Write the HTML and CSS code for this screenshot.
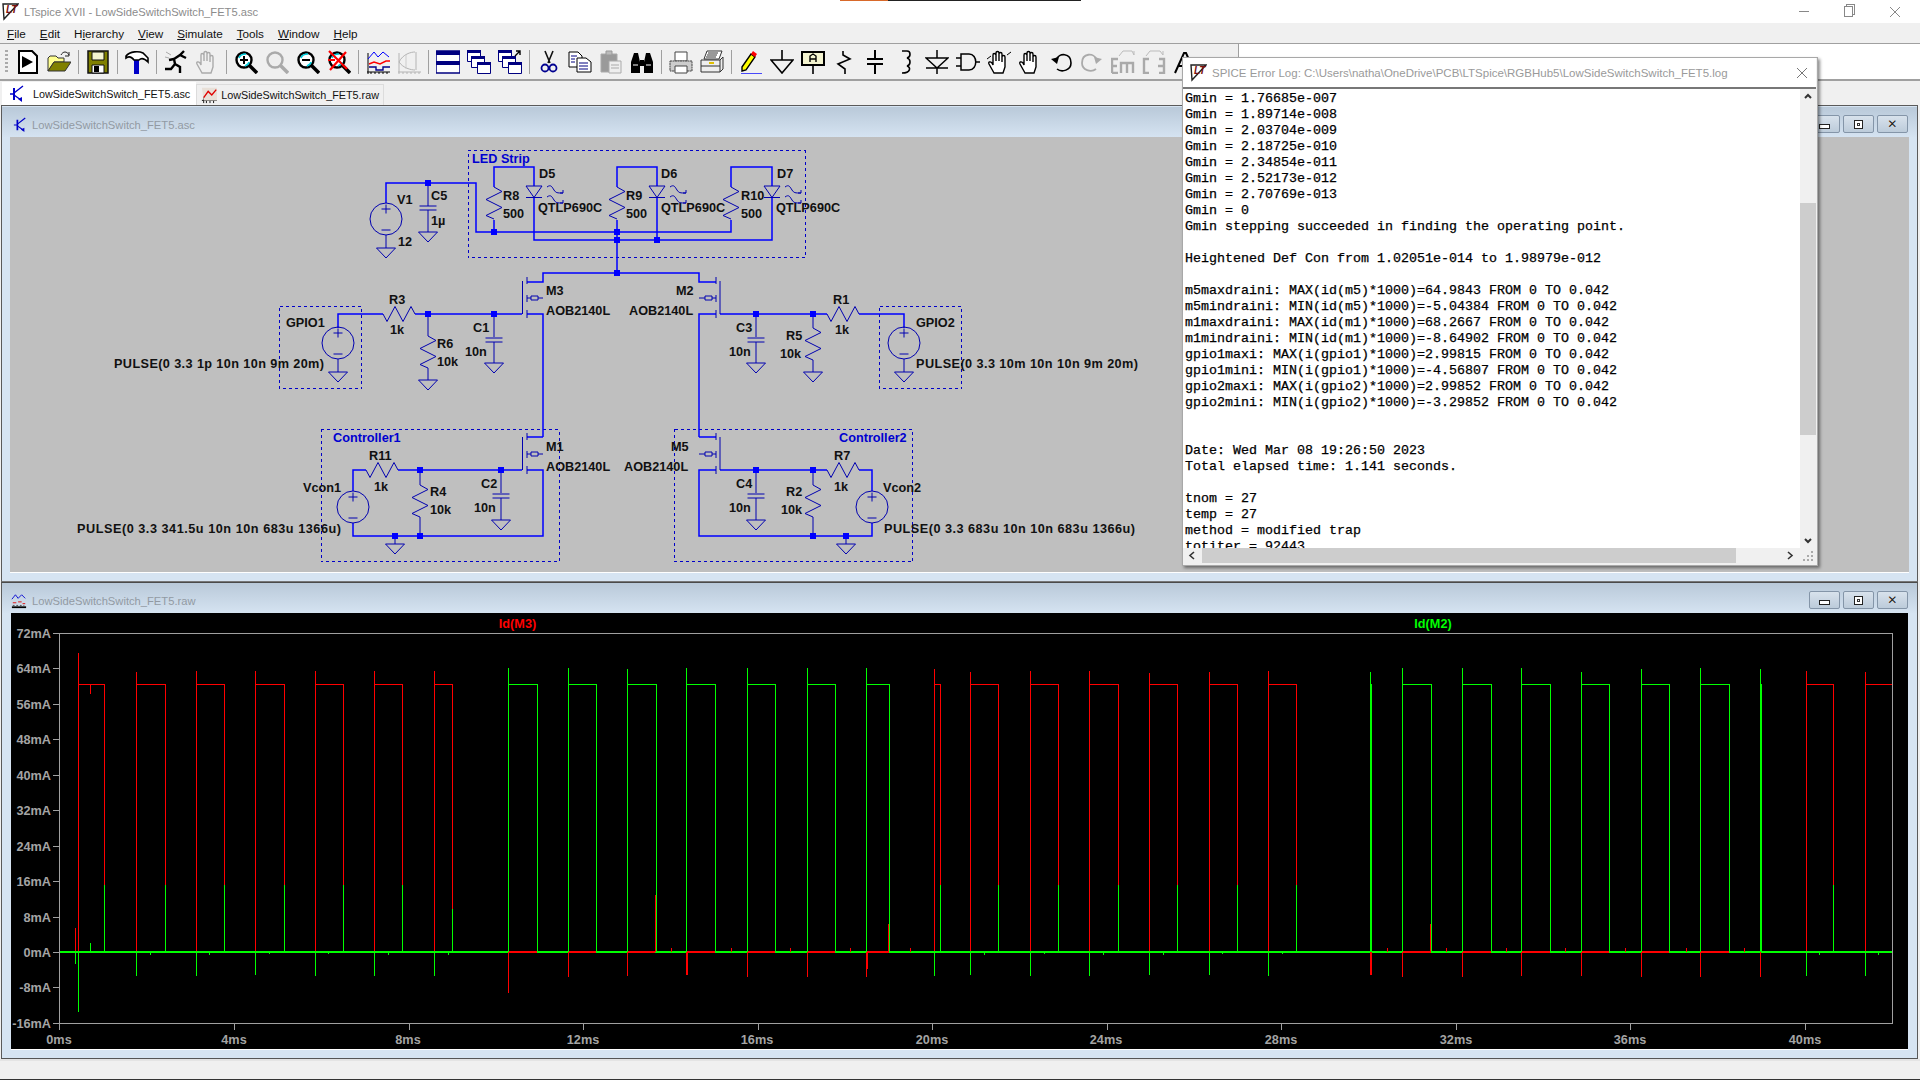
FILE: index.html
```html
<!DOCTYPE html>
<html lang="en">
<head>
<meta charset="utf-8">
<title>LTspice XVII</title>
<link rel="stylesheet" href="styles.css">
</head>
<body>
<div class="os-line"><span class="os-orange"></span><span class="os-black"></span></div>
<header class="titlebar">
  <svg class="lt" width="17" height="18" viewBox="0 0 17 18"><path d="M1 1H16L2 16Z" fill="#fff" stroke="#222" stroke-width="1.4"/><text x="4" y="10" class="lt-txt">LT</text></svg>
  <span class="app-title">LTspice XVII - LowSideSwitchSwitch_FET5.asc</span>
  <span class="wc wc-min"></span><span class="wc wc-max"></span>
  <svg class="wc-x" width="12" height="12" viewBox="0 0 12 12"><path d="M1 1L11 11M11 1L1 11" stroke="#888" fill="none"/></svg>
</header>
<nav class="menubar">
  <span><u>F</u>ile</span><span><u>E</u>dit</span><span>H<u>i</u>erarchy</span><span><u>V</u>iew</span><span><u>S</u>imulate</span><span><u>T</u>ools</span><span><u>W</u>indow</span><span><u>H</u>elp</span>
</nav>
<div class="toolrow">
<div class="toolbar">
  <i class="grip"></i>
  <b class="tb"><svg width="24" height="24" viewBox="0 0 24 24"><path d="M3 1H16L21 6V23H3Z" fill="#fff" stroke="#000" stroke-width="2"/><path d="M6 6L17 12L6 18Z"/></svg></b>
  <b class="tb"><svg width="24" height="24" viewBox="0 0 24 24"><path d="M1 21V8L3 6H9L11 8H17V12H7L1 21Z" fill="#ffff90" stroke="#333"/><path d="M1 21L7 12H24L18 21Z" fill="#808000" stroke="#333"/><path d="M14 5C16 1 20 1 22 5M22 2V6H18" fill="none" stroke="#222"/></svg></b>
  <i class="sep"></i>
  <b class="tb"><svg width="24" height="24" viewBox="0 0 24 24"><path d="M2 1H22V23H2Z" fill="#808000" stroke="#111" stroke-width="1.5"/><path d="M6 2H18V10H6Z" fill="#f4f4d0" stroke="#111"/><path d="M6 15H18V23H6Z" fill="#fff" stroke="#111"/><path d="M8 16H13V22H8Z"/></svg></b>
  <i class="sep"></i>
  <b class="tb"><svg width="24" height="24" viewBox="0 0 24 24"><path d="M9 10H14V24H9Z" fill="#0000c8"/><path d="M1 6C5 1 14 1 18 3L23 8V12C19 8 16 8 14 10H9C7 7 4 6 1 8Z" fill="#fff" stroke="#000" stroke-width="1.6"/></svg></b>
  <i class="sep"></i>
  <b class="tb"><svg width="24" height="24" viewBox="0 0 24 24"><path d="M1 19H7L11 14L10 9L16 5L20 1M11 14L16 17V23M10 9L5 10M16 5L22 8" fill="none" stroke="#000" stroke-width="2.4"/><path d="M2 2L7 5M1 7L5 8" stroke="#aaa"/></svg></b>
  <b class="tb"><svg width="24" height="24" viewBox="0 0 24 24"><use href="#hand" class="hand-off"/></svg></b>
  <i class="sep"></i>
  <b class="tb"><svg width="24" height="24" viewBox="0 0 24 24"><use href="#lens"/><path d="M6 10H14M10 6V14" stroke="#000" stroke-width="2"/></svg></b>
  <b class="tb"><svg width="24" height="24" viewBox="0 0 24 24"><circle cx="10" cy="10" r="7.5" fill="#eee" stroke="#aaa" stroke-width="2.4"/><path d="M15.5 15.5L23 23" stroke="#aaa" stroke-width="3.5"/></svg></b>
  <b class="tb"><svg width="24" height="24" viewBox="0 0 24 24"><use href="#lens"/><path d="M6 10H14" stroke="#000" stroke-width="2"/></svg></b>
  <b class="tb"><svg width="24" height="24" viewBox="0 0 24 24"><use href="#lens"/><path d="M2 1L20 19M19 2L3 20M1 10H8" stroke="#f00" stroke-width="2.2"/></svg></b>
  <i class="sep"></i>
  <b class="tb"><svg width="24" height="24" viewBox="0 0 24 24"><path d="M1 22H24M2 3V24M5 22V24M9 22V24M13 22V24M17 22V24M21 22V24" stroke="#000" fill="none"/><path d="M2 9L8 2L12 7L17 2L23 7" stroke="#00f" fill="none"/><path d="M3 14L8 12L14 14L20 11H24" stroke="#f00" fill="none" stroke-width="1.4"/><path d="M3 17H10V20H17V17H24" stroke="#008" fill="none" stroke-width="1.4"/></svg></b>
  <b class="tb"><svg width="24" height="24" viewBox="0 0 24 24"><path d="M1 22H24M2 3V24M6 22V24M10 22V24M14 22V24M18 22V24M22 22V24M2 12C6 4 14 2 18 2M19 2V20M2 12C6 18 14 20 18 20" stroke="#b4b4b4" fill="none"/><path d="M9 5V19" stroke="#ccc"/></svg></b>
  <i class="sep"></i>
  <b class="tb"><svg width="24" height="24" viewBox="0 0 24 24"><path d="M0 1H24V23H0Z" fill="#fff" stroke="#000080" stroke-width="1.5"/><path d="M0 1H24V5H0ZM0 11H24V15H0Z" fill="#000080"/></svg></b>
  <b class="tb"><svg width="24" height="24" viewBox="0 0 24 24"><use href="#mw" x="0" y="0"/><use href="#mw" x="4" y="6"/><use href="#mw" x="10" y="12"/></svg></b>
  <b class="tb"><svg width="24" height="24" viewBox="0 0 24 24"><use href="#mw" x="0" y="0"/><use href="#mw" x="4" y="6"/><use href="#mw" x="10" y="12"/><path d="M17 6L22 1M18 1H22V5" stroke="#000" fill="none" stroke-width="1.4"/></svg></b>
  <i class="sep"></i>
  <b class="tb"><svg width="24" height="24" viewBox="0 0 24 24"><path d="M8 1L13 13M16 1L11 13" stroke="#111" stroke-width="1.6"/><circle cx="8" cy="18" r="3.5" fill="none" stroke="#000090" stroke-width="1.8"/><circle cx="16" cy="18" r="3.5" fill="none" stroke="#000090" stroke-width="1.8"/></svg></b>
  <b class="tb"><svg width="24" height="24" viewBox="0 0 24 24"><path d="M1 2H10L14 6V17H1Z" fill="#fff" stroke="#000"/><path d="M9 8H18L23 12V22H9Z" fill="#fff" stroke="#000"/><path d="M3 6H9M3 9H7M3 12H7M11 13H20M11 16H20M11 19H20" stroke="#000080"/></svg></b>
  <b class="tb"><svg width="24" height="24" viewBox="0 0 24 24"><path d="M2 4H18V22H2Z" fill="#9a9a9a" stroke="#aaa"/><path d="M7 1H13V5H7Z" fill="#bbb" stroke="#999"/><path d="M10 11H22V23H10Z" fill="#eee" stroke="#aaa"/><path d="M12 15H20M12 18H20" stroke="#aaa"/></svg></b>
  <b class="tb"><svg width="24" height="24" viewBox="0 0 24 24"><path d="M1 12L4 3H8L10 12V23H1ZM23 12L20 3H16L14 12V23H23ZM10 10H14V16H10Z"/><path d="M3 15H8M16 15H21" stroke="#fff"/></svg></b>
  <i class="sep"></i>
  <b class="tb"><svg width="24" height="24" viewBox="0 0 24 24"><path d="M6 2H18V11H6Z" fill="#fff" stroke="#444"/><path d="M1 11H23V21H1Z" fill="#ccc" stroke="#444" stroke-dasharray="2 .5"/><path d="M6 16H18V23H6Z" fill="#fff" stroke="#444"/></svg></b>
  <b class="tb"><svg width="24" height="24" viewBox="0 0 24 24"><path d="M7 1H22L19 9H4Z" fill="#fff" stroke="#333"/><path d="M1 10H20L23 7V19L20 22H1Z" fill="#eee" stroke="#333"/><path d="M1 16H20M20 10V22M8 3H18M7 5H17M6 7H16" stroke="#333"/><path d="M9 13H14" stroke="#e0c000" stroke-width="2"/></svg></b>
  <i class="sep"></i>
  <b class="tb"><svg width="24" height="24" viewBox="0 0 24 24"><path d="M3 17L12 4L16 7L7 20L3 21Z" fill="#ff0" stroke="#000" stroke-width="1.4"/><path d="M12 4L14 1L18 4L16 7Z" fill="#f00"/><path d="M2 24H23" stroke="#00f" stroke-width="1.4"/></svg></b>
  <b class="tb"><svg width="24" height="24" viewBox="0 0 24 24"><path d="M12 0V10M1 10H23L12 23Z" fill="none" stroke="#000" stroke-width="1.6"/></svg></b>
  <b class="tb"><svg width="24" height="24" viewBox="0 0 24 24"><path d="M1 2H23V15H1Z" fill="#f4f4d0" stroke="#000" stroke-width="2"/><path d="M12 15V24" stroke="#000" stroke-width="1.6"/><path d="M9 12V6L12 4L15 6V12M9 9H15" fill="none" stroke="#000" stroke-width="1.4"/></svg></b>
  <b class="tb"><svg width="24" height="24" viewBox="0 0 24 24"><path d="M11 1V5L18 9L6 14L13 19V24" fill="none" stroke="#000" stroke-width="1.6"/></svg></b>
  <b class="tb"><svg width="24" height="24" viewBox="0 0 24 24"><path d="M12 0V9M4 9H20M4 14H20M12 14V24" fill="none" stroke="#000" stroke-width="2"/></svg></b>
  <b class="tb"><svg width="24" height="24" viewBox="0 0 24 24"><path d="M8 1H13C17 1 17 7 13 8C17 9 17 15 13 16C17 17 17 23 8 23" fill="none" stroke="#000" stroke-width="1.6"/></svg></b>
  <b class="tb"><svg width="24" height="24" viewBox="0 0 24 24"><path d="M12 0V8M1 8H23L12 18ZM1 18H23M12 18V26" fill="none" stroke="#000" stroke-width="1.5"/></svg></b>
  <b class="tb"><svg width="24" height="24" viewBox="0 0 24 24"><path d="M5 4H13C22 4 22 20 13 20H5ZM0 8H5M0 16H5M19 12H24" fill="none" stroke="#000" stroke-width="1.5"/></svg></b>
  <b class="tb"><svg width="24" height="24" viewBox="0 0 24 24"><use href="#hand" class="hand-on"/><path d="M0 9L4 6M20 5L24 2" stroke="#000"/></svg></b>
  <b class="tb"><svg width="24" height="24" viewBox="0 0 24 24"><use href="#hand" class="hand-on"/></svg></b>
  <b class="tb"><svg width="24" height="24" viewBox="0 0 24 24"><path d="M7 10C10 2 22 3 22 13C22 20 13 23 8 19" fill="none" stroke="#000" stroke-width="1.6"/><path d="M2 9L8 14L10 7Z" /></svg></b>
  <b class="tb"><svg width="24" height="24" viewBox="0 0 24 24"><path d="M17 10C14 2 2 3 2 13C2 20 11 23 16 19" fill="none" stroke="#aaa" stroke-width="1.8"/><path d="M22 9L16 14L14 7Z" fill="#aaa"/></svg></b>
  <b class="tb"><svg width="24" height="24" viewBox="0 0 24 24"><path d="M1 23V9H7M1 16H6M1 23H7M10 23V13H22V23M16 13V23" fill="none" stroke="#aaa" stroke-width="2.4"/><path d="M8 6L12 1H21L23 5M23 5V1" fill="none" stroke="#bbb"/></svg></b>
  <b class="tb"><svg width="24" height="24" viewBox="0 0 24 24"><path d="M7 9H2V23H7M17 9H22V23H17M16 16H22" fill="none" stroke="#aaa" stroke-width="2.4"/><path d="M4 6L8 1H18L21 5M21 5V1" fill="none" stroke="#bbb"/></svg></b>
  <b class="tb"><svg width="24" height="24" viewBox="0 0 24 24"><path d="M2 23L11 3H13L22 23M6 16H18" fill="none" stroke="#000" stroke-width="2"/></svg></b>
</div>
<div class="toolfill"></div>
</div>
<div class="tabs">
  <span class="tab tab-on"><svg width="16" height="18" viewBox="0 0 16 18"><use href="#npn"/></svg>LowSideSwitchSwitch_FET5.asc</span>
  <span class="tab"><svg width="18" height="18" viewBox="0 0 18 18"><use href="#wave"/></svg>LowSideSwitchSwitch_FET5.raw</span>
</div>

<main class="mdi">
<section class="win win-a">
  <div class="wtitle"><svg class="ico-a" width="14" height="18" viewBox="0 0 16 18"><use href="#npn"/></svg><span>LowSideSwitchSwitch_FET5.asc</span><div class="wbtns"><b class="wb"><i class="ic-min"></i></b><b class="wb"><i class="ic-max"></i></b><b class="wb"><i class="ic-x">✕</i></b></div></div>
  <svg class="canvas schem" viewBox="10 137 1899 435" width="1899" height="435">
    <defs>
      <path id="gnd" d="M-9.5 0H9.5L0 10Z"/>
      <path id="rv" d="M0 0L8 4.5L-8 12.5L8 20.5L-8 28.5L0 32"/>
      <path id="rh" d="M0 0L4 7.5L12 -7.5L20 7.5L28 -7.5L32 0"/>
      <path id="cap" d="M-8.5 0H8.5M-8.5 4H8.5"/>
      <g id="src"><circle r="16"/><path d="M-4.5 -10H4.5M0 -14.5V-5.5M-4.5 11H4.5"/></g>
      <g id="led"><path d="M-8 0H8L0 11.5ZM-8 11.5H8"/><path d="M13 1C17 -2 18 1 20 4S23 7 29 7M29 4V7H26M13 11C17 8 18 11 20 14S23 17 29 17M29 14V17H26"/></g>
      <path id="mr" d="M-4.5 -1V32M0 -5V2M0 13V20M0 28V36M0 16H4M4 14H11V18H4ZM11 16H16"/>
      <path id="ml" d="M4 -1V32M0 -5V2M0 13V20M0 28V36M0 16H-4M-4 14H-11V18H-4ZM-11 16H-17"/>
      <path id="j" d="M-3 -3H3V3H-3Z"/>
    </defs>
    <rect class="bg" x="10" y="137" width="1899" height="435"/>
    <g class="dash">
      <rect x="468" y="150.5" width="337" height="107"/>
      <rect x="279.5" y="306.5" width="82" height="82"/>
      <rect x="879.5" y="306.5" width="82" height="82"/>
      <rect x="321" y="429.5" width="238" height="132"/>
      <rect x="674.5" y="429.5" width="238" height="132"/>
    </g>
    <path class="wire" d="M386 203V183H476V232H731V220M494 220V232M494 187V167H534V186M534 197V240H772V197M617 187V167H657V186M617 220V273M731 187V167H772V186M657 197V240M617 273H543V282H527M617 273H699V282H716M543 437V314H527M543 437H527M699 437V314H716M699 437H716M338 328V314H383M415 314H522M720 314H827M859 314H904V328M353 491V470H366M398 470H522M353 523V536H543V470H527M872 491V470H859M827 470H720M872 523V536H699V470H716"/>
    <g class="comp">
      <path d="M386 235V248M428 183V206M428 210V232M428 314V336M428 368V380M494 314V337M494 342V363M756 314V337M756 342V363M813 314V328M813 360V372M338 359V372M904 359V372M420 470V485M420 517V536M501 470V493M501 498V520M395 536V544M756 470V493M756 498V520M813 470V485M813 517V536M846 536V544"/>
      <use href="#src" x="386" y="219"/><use href="#src" x="338" y="343"/><use href="#src" x="904" y="343"/><use href="#src" x="353" y="507"/><use href="#src" x="872" y="507"/>
      <use href="#gnd" x="386" y="248"/><use href="#gnd" x="428" y="232"/><use href="#gnd" x="338" y="372"/><use href="#gnd" x="428" y="380"/><use href="#gnd" x="494" y="363"/><use href="#gnd" x="756" y="363"/><use href="#gnd" x="813" y="372"/><use href="#gnd" x="904" y="372"/><use href="#gnd" x="501" y="520"/><use href="#gnd" x="395" y="544"/><use href="#gnd" x="756" y="520"/><use href="#gnd" x="846" y="544"/>
      <use href="#cap" x="428" y="206"/><use href="#cap" x="494" y="338"/><use href="#cap" x="756" y="338"/><use href="#cap" x="501" y="494"/><use href="#cap" x="756" y="494"/>
      <use href="#rv" x="494" y="187"/><use href="#rv" x="617" y="187"/><use href="#rv" x="731" y="187"/><use href="#rv" x="428" y="336"/><use href="#rv" x="813" y="328"/><use href="#rv" x="420" y="485"/><use href="#rv" x="813" y="485"/>
      <use href="#rh" x="383" y="314"/><use href="#rh" x="827" y="314"/><use href="#rh" x="366" y="470"/><use href="#rh" x="827" y="470"/>
      <use href="#led" x="534" y="186"/><use href="#led" x="657" y="186"/><use href="#led" x="772" y="186"/>
      <use href="#mr" x="527" y="282"/><use href="#mr" x="527" y="438"/><use href="#ml" x="716" y="282"/><use href="#ml" x="716" y="438"/>
    </g>
    <g class="junc">
      <use href="#j" x="428" y="183"/><use href="#j" x="494" y="232"/><use href="#j" x="617" y="232"/><use href="#j" x="617" y="240"/><use href="#j" x="657" y="240"/><use href="#j" x="617" y="273"/><use href="#j" x="428" y="314"/><use href="#j" x="494" y="314"/><use href="#j" x="756" y="314"/><use href="#j" x="813" y="314"/><use href="#j" x="420" y="470"/><use href="#j" x="501" y="470"/><use href="#j" x="395" y="536"/><use href="#j" x="420" y="536"/><use href="#j" x="756" y="470"/><use href="#j" x="813" y="470"/><use href="#j" x="813" y="536"/><use href="#j" x="846" y="536"/>
    </g>
    <g class="nm">
      <text x="472" y="163">LED Strip</text><text x="333" y="442">Controller1</text><text x="839" y="442">Controller2</text>
    </g>
    <g class="lb">
      <text x="397" y="204">V1</text><text x="398" y="246">12</text><text x="431" y="200">C5</text><text x="431" y="225">1µ</text>
      <text x="503" y="200">R8</text><text x="503" y="218">500</text><text x="539" y="178">D5</text><text x="538" y="212">QTLP690C</text>
      <text x="626" y="200">R9</text><text x="626" y="218">500</text><text x="661" y="178">D6</text><text x="661" y="212">QTLP690C</text>
      <text x="741" y="200">R10</text><text x="741" y="218">500</text><text x="777" y="178">D7</text><text x="776" y="212">QTLP690C</text>
      <text x="286" y="327">GPIO1</text><text x="114" y="368" textLength="210">PULSE(0 3.3 1p 10n 10n 9m 20m)</text><text x="389" y="304">R3</text><text x="390" y="334">1k</text>
      <text x="437" y="348">R6</text><text x="437" y="366">10k</text><text x="473" y="332">C1</text><text x="465" y="356">10n</text>
      <text x="546" y="295">M3</text><text x="546" y="315">AOB2140L</text><text x="676" y="295">M2</text><text x="629" y="315">AOB2140L</text>
      <text x="736" y="332">C3</text><text x="729" y="356">10n</text><text x="786" y="340">R5</text><text x="780" y="358">10k</text>
      <text x="833" y="304">R1</text><text x="835" y="334">1k</text><text x="916" y="327">GPIO2</text><text x="916" y="368" textLength="222">PULSE(0 3.3 10m 10n 10n 9m 20m)</text>
      <text x="369" y="460">R11</text><text x="374" y="491">1k</text><text x="303" y="492">Vcon1</text><text x="430" y="496">R4</text><text x="430" y="514">10k</text>
      <text x="481" y="488">C2</text><text x="474" y="512">10n</text><text x="546" y="451">M1</text><text x="546" y="471">AOB2140L</text><text x="77" y="533" textLength="264">PULSE(0 3.3 341.5u 10n 10n 683u 1366u)</text>
      <text x="671" y="451">M5</text><text x="624" y="471">AOB2140L</text><text x="834" y="460">R7</text><text x="834" y="491">1k</text><text x="883" y="492">Vcon2</text><text x="884" y="533" textLength="251">PULSE(0 3.3 683u 10n 10n 683u 1366u)</text>
      <text x="736" y="488">C4</text><text x="729" y="512">10n</text><text x="786" y="496">R2</text><text x="781" y="514">10k</text>
    </g>
  </svg>
</section>

<section class="win win-b">
  <div class="wtitle"><svg width="16" height="18" viewBox="0 0 18 18"><use href="#wave2"/></svg><span>LowSideSwitchSwitch_FET5.raw</span><div class="wbtns"><b class="wb"><i class="ic-min"></i></b><b class="wb"><i class="ic-max"></i></b><b class="wb"><i class="ic-x">✕</i></b></div></div>
  <svg class="canvas plot" viewBox="11 613 1897 436" width="1897" height="436">
    <rect class="black" x="11" y="613" width="1897" height="436"/>
    <path class="axis" d="M59.5 633.5H1892.5V1023.5H59.5ZM53 633.5H60M53 668.5H60M53 704.5H60M53 739.5H60M53 775.5H60M53 810.5H60M53 846.5H60M53 881.5H60M53 917.5H60M53 952.5H60M53 987.5H60M53 1023.5H60M59.5 1023V1030M234.5 1023V1030M409.5 1023V1030M583.5 1023V1030M758.5 1023V1030M932.5 1023V1030M1107.5 1023V1030M1281.5 1023V1030M1456.5 1023V1030M1630.5 1023V1030M1805.5 1023V1030"/>
    <g class="ax-y">
      <text x="51" y="638">72mA</text><text x="51" y="673">64mA</text><text x="51" y="709">56mA</text><text x="51" y="744">48mA</text><text x="51" y="780">40mA</text><text x="51" y="815">32mA</text><text x="51" y="851">24mA</text><text x="51" y="886">16mA</text><text x="51" y="922">8mA</text><text x="51" y="957">0mA</text><text x="51" y="992">-8mA</text><text x="51" y="1028">-16mA</text>
    </g>
    <g class="ax-x">
      <text x="59" y="1044">0ms</text><text x="234" y="1044">4ms</text><text x="408" y="1044">8ms</text><text x="583" y="1044">12ms</text><text x="757" y="1044">16ms</text><text x="932" y="1044">20ms</text><text x="1106" y="1044">24ms</text><text x="1281" y="1044">28ms</text><text x="1456" y="1044">32ms</text><text x="1630" y="1044">36ms</text><text x="1805" y="1044">40ms</text>
    </g>
    <text class="tr-r" x="517.5" y="628">Id(M3)</text>
    <text class="tr-g" x="1433" y="628">Id(M2)</text>
    <path class="red t1" d="M78.5 952V653M104.5 684V885M136.5 952V672M165.5 684V885M196.5 952V671M224.5 684V885M255.5 952V671M284.5 684V885M315.5 952V671M343.5 684V885M374.5 952V671M402.5 684V885M434.5 952V671M452.5 684V909M934.5 952V669M940.5 684V885M970.5 952V672M998.5 684V885M1030.5 952V671M1058.5 684V885M1089.5 952V671M1118.5 684V885M1149.5 952V673M1177.5 684V885M1209.5 952V672M1237.5 684V885M1268.5 952V671M1296.5 684V885M1806.5 952V671M1833.5 684V885M1865.5 952V672M75.5 952V928M90.5 684V694"/>
    <path class="red t1" d="M78 684.5H104M136 684.5H165M196 684.5H224M255 684.5H284M315 684.5H343M374 684.5H402M434 684.5H452M934 684.5H940M970 684.5H998M1030 684.5H1058M1089 684.5H1118M1149 684.5H1177M1209 684.5H1237M1268 684.5H1296M1806 684.5H1833M1865 684.5H1892"/>
    <path class="green t1" d="M104.5 952V885M165.5 952V885M224.5 952V885M284.5 952V885M343.5 952V885M402.5 952V885M452.5 952V909M940.5 952V885M998.5 952V885M1058.5 952V885M1118.5 952V885M1177.5 952V885M1237.5 952V885M1296.5 952V885M1833.5 952V885M78.5 952V1012M75.5 952V964M136.5 952V976M196.5 952V976M255.5 952V975M315.5 952V976M374.5 952V976M434.5 952V976M934.5 952V976M970.5 952V975M1030.5 952V976M1089.5 952V976M1149.5 952V975M1209.5 952V975M1268.5 952V976M1806.5 952V976M1865.5 952V976M90.5 952V943M150.5 952V955M209.5 952V955M269.5 952V954M328.5 952V954M388.5 952V955M448.5 952V955M984.5 952V955M1044.5 952V954M1103.5 952V955M1163.5 952V955M1222.5 952V954M1282.5 952V954M1819.5 952V955M1878.5 952V955"/>
    <path class="green t1" d="M508.5 952V668M537.5 684V952M568.5 952V668M596.5 684V952M627.5 952V669M656.5 684V952M686.5 952V668M715.5 684V952M747.5 952V668M775.5 684V952M807.5 952V668M835.5 684V952M866.5 952V668M889.5 684V952M1370.5 952V672M1371.5 684V952M1402.5 952V668M1431.5 684V952M1462.5 952V668M1491.5 684V952M1521.5 952V668M1550.5 684V952M1581.5 952V672M1609.5 684V952M1641.5 952V669M1669.5 684V952M1700.5 952V668M1729.5 684V952M1760.5 952V669M1761.5 684V952"/>
    <path class="green t1" d="M508 684.5H537M568 684.5H596M627 684.5H656M686 684.5H715M747 684.5H775M807 684.5H835M866 684.5H889M1402 684.5H1431M1462 684.5H1491M1521 684.5H1550M1581 684.5H1609M1641 684.5H1669M1700 684.5H1729"/>
    <path class="green t2" d="M60 952H1892"/>
    <path class="red t2" d="M509 952H537M569 952H596M628 952H655M687 952H715M748 952H775M808 952H835M867 952H889M1403 952H1431M1463 952H1491M1522 952H1550M1582 952H1609M1642 952H1669M1701 952H1729"/>
    <path class="red t1" d="M508.5 952V993M568.5 952V977M627.5 952V976M686.5 952V975M687.5 952V975M747.5 952V977M807.5 952V977M866.5 952V977M867.5 952V969M1370.5 952V975M1371.5 952V975M1402.5 952V977M1462.5 952V977M1521.5 952V976M1581.5 952V976M1641.5 952V977M1700.5 952V977M1760.5 952V977M655.5 952V895M888.5 952V924M1430.5 952V924M671.5 952V948M731.5 952V948M790.5 952V948M850.5 952V948M910.5 952V948M1387.5 952V948M1446.5 952V948M1506.5 952V948M1565.5 952V948M1625.5 952V948M1686.5 952V948M1744.5 952V948"/>
  </svg>
</section>
</main>
<footer class="status"></footer>

<aside class="log">
  <div class="log-title">
    <svg width="17" height="18" viewBox="0 0 17 18"><path d="M1 1H16L2 16Z" fill="#fff" stroke="#222" stroke-width="1.4"/><text x="4" y="10" class="lt-txt">LT</text></svg>
    <span>SPICE Error Log: C:\Users\natha\OneDrive\PCB\LTSpice\RGBHub5\LowSideSwitchSwitch_FET5.log</span>
    <svg class="log-x" width="12" height="12" viewBox="0 0 12 12"><path d="M1 1L11 11M11 1L1 11" stroke="#777" fill="none"/></svg>
  </div>
  <div class="log-body">
<pre class="log-text">Gmin = 1.76685e-007
Gmin = 1.89714e-008
Gmin = 2.03704e-009
Gmin = 2.18725e-010
Gmin = 2.34854e-011
Gmin = 2.52173e-012
Gmin = 2.70769e-013
Gmin = 0
Gmin stepping succeeded in finding the operating point.

Heightened Def Con from 1.02051e-014 to 1.98979e-012

m5maxdraini: MAX(id(m5)*1000)=64.9843 FROM 0 TO 0.042
m5mindraini: MIN(id(m5)*1000)=-5.04384 FROM 0 TO 0.042
m1maxdraini: MAX(id(m1)*1000)=68.2667 FROM 0 TO 0.042
m1mindraini: MIN(id(m1)*1000)=-8.64902 FROM 0 TO 0.042
gpio1maxi: MAX(i(gpio1)*1000)=2.99815 FROM 0 TO 0.042
gpio1mini: MIN(i(gpio1)*1000)=-4.56807 FROM 0 TO 0.042
gpio2maxi: MAX(i(gpio2)*1000)=2.99852 FROM 0 TO 0.042
gpio2mini: MIN(i(gpio2)*1000)=-3.29852 FROM 0 TO 0.042


Date: Wed Mar 08 19:26:50 2023
Total elapsed time: 1.141 seconds.

tnom = 27
temp = 27
method = modified trap
totiter = 92443</pre>
    <div class="vscroll">
      <svg width="16" height="16" viewBox="0 0 16 16"><path d="M5 9L8 6L11 9" fill="none" stroke="#333" stroke-width="2"/></svg>
      <div class="vthumb"></div>
      <div class="spacer"></div>
      <svg width="16" height="16" viewBox="0 0 16 16"><path d="M5 7L8 10L11 7" fill="none" stroke="#333" stroke-width="2"/></svg>
    </div>
  </div>
  <div class="hscroll">
    <svg width="19" height="15" viewBox="0 0 19 15"><path d="M11 4L7 7.5L11 11" fill="none" stroke="#333" stroke-width="1.6"/></svg>
    <div class="hthumb"></div>
    <div class="spacer"></div>
    <svg width="19" height="15" viewBox="0 0 19 15"><path d="M7 4L11 7.5L7 11" fill="none" stroke="#333" stroke-width="1.6"/></svg>
    <svg width="16" height="15" viewBox="0 0 16 15"><path d="M11 11h2v2h-2zM7 11h2v2H7zM11 7h2v2h-2zM3 11h2v2H3zM7 7h2v2H7zM11 3h2v2h-2z" fill="#aaa"/></svg>
  </div>
</aside>

<svg class="sprites" width="0" height="0" aria-hidden="true">
  <defs>
    <g id="lens"><circle cx="10" cy="10" r="7.5" fill="#fff" stroke="#000" stroke-width="2.4"/><path d="M5 8C6 5 9 4 12 4M15 12C15 14 13 15 11 16" fill="none" stroke="#00d0e0" stroke-width="1.6"/><path d="M15.5 15.5L23 23" stroke="#000" stroke-width="3.5"/></g>
    <path id="hand" d="M7 23L2 14C1 12 3 11 5 13L6 15V5C6 3 8 3 9 5V11V3C9 1 12 1 12 3V11V4C12 2 15 2 15 4V12V7C15 5 18 5 18 7V17L16 23Z"/>
    <g id="mw"><path d="M0.5 .5H13.5V11.5H.5Z" fill="#fff" stroke="#000080"/><path d="M0 0H14V3H0Z" fill="#000080"/></g>
    <g id="npn"><path d="M5 3V15" stroke="#0000c8" stroke-width="2" fill="none"/><path d="M14 1L5 8M5 10L12 15M1 9H5" stroke="#0000c8" stroke-width="1.4" fill="none"/><path d="M9 14L13 17L13 12Z" fill="#0000c8"/></g>
    <g id="wave"><path d="M1 15H18M3 2V18M6 15V18M10 15V18M14 15V18" stroke="#000" fill="none"/><path d="M1 1H18V15H3Z" fill="#e8e0d8"/><path d="M3 12L8 5L12 9L17 3" stroke="#e00000" stroke-width="1.5" fill="none"/></g>
    <g id="wave2"><path d="M1 16H17" stroke="#000" stroke-width="2"/><path d="M1 7L5 2L8 6L12 2L16 6" stroke="#0000d0" fill="none"/><path d="M2 11H6M8 10H12M13 12H16" stroke="#e00000" fill="none"/><path d="M2 14H15" stroke="#444" stroke-dasharray="2 2"/></g>
  </defs>
</svg>
</body>
</html>
```
FILE: styles.css
```css
* { box-sizing: border-box; }
html, body { margin: 0; padding: 0; }
body {
  width: 1920px; height: 1080px; overflow: hidden; position: relative;
  background: #f0f0f0; display: flex; flex-direction: column;
  font-family: "Liberation Sans", Arial, sans-serif; color: #000;
}
.os-line { position: absolute; top: 0; left: 840px; display: flex; height: 1px; }
.os-orange { width: 48px; background: #d8692a; }
.os-black { width: 193px; background: #222; }

.titlebar { height: 23px; flex: none; background: #fff; display: flex; align-items: center; padding-left: 2px; }
.lt-txt { font: italic bold 10px "Liberation Sans", sans-serif; fill: #7a1010; }
.app-title { margin-left: 5px; font-size: 11.2px; color: #8c8c8c; flex: 1; }
.wc { display: block; }
.wc-min { width: 10px; height: 1px; background: #888; margin-right: 35px; }
.wc-max { width: 9px; height: 11px; border: 1px solid #888; margin-right: 36px; box-shadow: 2px -2px 0 -1px #fff, 2px -2px 0 0 #888; }
.wc-x { margin-right: 19px; }

.menubar { height: 20px; flex: none; background: #f0f0f0; display: flex; gap: 14px; align-items: center; padding-left: 7px; font-size: 11.7px; color: #111; }

.toolrow { height: 38px; flex: none; display: flex; border-top: 1px solid #a0a0a0; border-bottom: 2px solid #a0a0a0; }
.toolbar { width: 1239px; flex: none; display: flex; align-items: center; background: #f0f0f0; border-right: 1px solid #a0a0a0; overflow: hidden; }
.toolfill { flex: 1; background: #fff; }
.grip { width: 3px; height: 24px; margin: 0 4px 0 5px; background: repeating-linear-gradient(#aaa 0 2px, transparent 2px 4px); display: block; flex: none; }
.tb { width: 31px; flex: none; height: 24px; display: flex; justify-content: center; }
.sep { width: 1px; flex: none; height: 24px; margin: 0 3.5px; background: #a0a0a0; display: block; }
.hand-on { fill: #fff; stroke: #000; stroke-width: 1.4; }
.hand-off { fill: #f0f0f0; stroke: #aaa; stroke-width: 1.4; }

.tabs { height: 24px; flex: none; display: flex; align-items: flex-end; padding-left: 2px; font-size: 10.8px; color: #111; }
.tab { height: 21px; display: flex; align-items: center; gap: 4px; padding: 0 4px 1px; background: #f0f0f0; border: 1px solid #dcdcdc; border-bottom: 0; width: 188px; }
.tab-on { height: 23px; width: 194px; background: #fff; border-color: #fff; gap: 8px; padding-left: 6px; }

.mdi { flex: 1; display: flex; flex-direction: column; min-height: 0; }
.win { height: 477px; flex: none; margin: 0 2px 0 1px; padding: 0 8px 8px 8px; border: 1px solid #5a5a5a; border-bottom-color: #777; background: #d6e4f2; display: flex; flex-direction: column; }
.win-a { padding-top: 1px; }
.win-b { border-top-color: #4a4a4a; border-bottom: 1px solid #555; }
.wtitle { height: 30px; flex: none; margin: 0 -8px; padding: 5px 9px 0 9px; background: linear-gradient(#b9c9d9, #d5e3f1); display: flex; align-items: center; gap: 5px; font-size: 11.2px; color: #929aa3; }
.ico-a { margin-left: 2px; }
.wbtns { margin-left: auto; display: flex; gap: 2.5px; margin-top: -1px; }
.wb { width: 31.5px; height: 18px; border: 1px solid #8495a8; border-radius: 2px; background: linear-gradient(#d8e2ec, #bccbda); display: flex; align-items: center; justify-content: center; }
.ic-min { width: 11px; height: 5px; margin-top: 4px; border: 1px solid #222; background: #fff; display: block; }
.ic-max { width: 9px; height: 9px; border: 1px solid #222; background: #fff; display: block; box-shadow: inset 0 0 0 2px #fff, inset 0 0 0 3px #333; }
.ic-x { font: bold 12px "DejaVu Sans", sans-serif; color: #222; text-shadow: 0 0 1px #fff; }

.canvas { display: block; flex: none; }
.win-a .canvas { box-shadow: 0 1px 0 #fff; }
.win-b .canvas { margin-left: 1px; box-shadow: 0 1px 0 #fff; }

.bg { fill: #bfbfbf; }
.dash rect { fill: none; stroke: #0000c8; stroke-width: 1; stroke-dasharray: 3 3; shape-rendering: crispEdges; }
.wire { fill: none; stroke: #0000ff; stroke-width: 1.5; }
.comp { fill: none; stroke: #0000b0; stroke-width: 1; }
.junc { fill: #0000ff; shape-rendering: crispEdges; }
.lb text, .nm text { font: bold 12.7px "Liberation Sans", Arial, sans-serif; }
.lb text { fill: #111; }
.nm text { fill: #0000d0; }

.black { fill: #000; }
.axis { fill: none; stroke: #a0a0a0; stroke-width: 1; shape-rendering: crispEdges; }
.ax-y text, .ax-x text, .tr-r, .tr-g { font: bold 12.7px "Liberation Sans", Arial, sans-serif; fill: #a4a4a4; }
.ax-y text { text-anchor: end; }
.ax-x text, .tr-r, .tr-g { text-anchor: middle; }
.tr-r { fill: #f00; }
.tr-g { fill: #0f0; }
.red, .green { fill: none; shape-rendering: crispEdges; }
.red { stroke: #f00; }
.green { stroke: #0f0; }
.t1 { stroke-width: 1; }
.t2 { stroke-width: 2; }

.status { height: 21px; flex: none; background: #f0f0f0; border-top: 2px solid #e4e4e4; border-bottom: 1px solid #333; }

.log { position: absolute; left: 1182px; top: 57px; width: 636px; height: 509px; padding: 0 1px 2px 0; background: #f0f0f0; border: 1px solid #a8a8a8; box-shadow: 2px 2px 3px rgba(0,0,0,.45); display: flex; flex-direction: column; }
.log-title { height: 31px; flex: none; background: #fff; display: flex; align-items: center; gap: 5px; padding-left: 7px; font-size: 11.5px; color: #9a9a9a; border-bottom: 2px solid #777; }
.log-x { margin-left: auto; margin-right: 8px; }
.log-body { flex: 1; min-height: 0; display: flex; background: #fff; }
.log-text { flex: 1; margin: 0; padding: 2px 0 0 2px; overflow: hidden; font: 13.33px/16px "Liberation Mono", "Courier New", monospace; color: #000; -webkit-text-stroke: .25px #000; }
.vscroll { width: 16px; flex: none; background: #f0f0f0; display: flex; flex-direction: column; }
.vscroll svg, .hscroll svg { flex: none; display: block; }
.vthumb { height: 232px; margin-top: 98px; flex: none; background: #cdcdcd; }
.spacer { flex: 1; }
.hscroll { height: 15px; flex: none; background: #f0f0f0; display: flex; }
.hthumb { width: 534px; flex: none; background: #cdcdcd; }
.sprites { position: absolute; }
```
